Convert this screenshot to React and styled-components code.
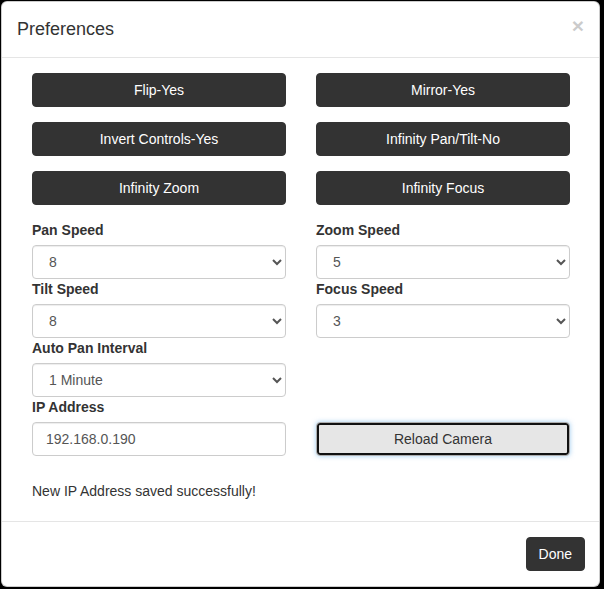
import React from "react";
import styled, { createGlobalStyle } from "styled-components";

const Global = createGlobalStyle`
  html, body { margin: 0; padding: 0; background: #000; }
  body {
    font-family: "Liberation Sans", Arial, Helvetica, sans-serif;
    font-size: 14px;
    line-height: 20px;
    color: #333;
  }
  * { box-sizing: border-box; }
`;

const Page = styled.div`
  width: 604px;
  height: 589px;
  padding: 1px 4px 0 1px;
`;

const Modal = styled.div`
  background: #fff;
  border: 1px solid rgba(0, 0, 0, 0.2);
  border-radius: 6px;
  width: 599px;
  overflow: hidden;
`;

const Header = styled.div`
  display: flex;
  align-items: flex-start;
  justify-content: space-between;
  padding: 15px;
  border-bottom: 1px solid #e5e5e5;
`;

const Title = styled.h4`
  margin: 0;
  font-size: 18px;
  font-weight: 500;
  line-height: 25px;
  color: #333;
`;

const Close = styled.button`
  border: 0;
  background: transparent;
  padding: 0;
  margin-top: -2px;
  font-family: inherit;
  font-size: 21px;
  font-weight: bold;
  line-height: 1;
  color: #000;
  opacity: 0.2;
  text-shadow: 0 1px 0 #fff;
  cursor: pointer;
`;

const Body = styled.div`
  padding: 15px 29px 20px 30px;
`;

const ButtonGrid = styled.div`
  display: grid;
  grid-template-columns: 1fr 1fr;
  column-gap: 30px;
  row-gap: 15px;
`;

const DarkButton = styled.button`
  height: 34px;
  padding: 6px 12px;
  border: 1px solid #333;
  border-radius: 4px;
  background: #333;
  color: #fff;
  font-family: inherit;
  font-size: 14px;
  line-height: 20px;
  cursor: pointer;
`;

const FieldGrid = styled.div`
  display: grid;
  grid-template-columns: 1fr 1fr;
  column-gap: 30px;
  margin-top: 15px;
  align-items: end;
`;

const Field = styled.div`
  display: flex;
  flex-direction: column;
`;

const Label = styled.label`
  font-weight: bold;
  line-height: 20px;
  margin-bottom: 5px;
  color: #333;
`;

const controlStyles = `
  height: 34px;
  width: 100%;
  padding: 6px 12px;
  border: 1px solid #ccc;
  border-radius: 4px;
  background: #fff;
  color: #555;
  font-family: "Liberation Sans", Arial, Helvetica, sans-serif;
  font-size: 14px;
  line-height: 20px;
  box-shadow: inset 0 1px 1px rgba(0, 0, 0, 0.075);
`;

const Select = styled.select`
  ${controlStyles}
`;

const Input = styled.input`
  ${controlStyles}
  padding-left: 13px;
`;

const ReloadButton = styled.button`
  height: 34px;
  width: 100%;
  padding: 6px 12px;
  border: 1px solid #adadad;
  border-radius: 4px;
  background: #e6e6e6;
  color: #333;
  font-family: inherit;
  font-size: 14px;
  line-height: 20px;
  box-shadow: inset 0 0 0 2px #111, 0 0 5px rgba(102, 175, 233, 0.6);
  cursor: pointer;
`;

const Message = styled.p`
  margin: 25px 0 0;
  line-height: 20px;
  color: #333;
`;

const Footer = styled.div`
  display: flex;
  justify-content: flex-end;
  padding: 15px 14px 15px 15px;
  border-top: 1px solid #e5e5e5;
`;

const DoneButton = styled(DarkButton)`
  width: auto;
`;

const speeds = ["1", "2", "3", "4", "5", "6", "7", "8", "9", "10"];

function SpeedSelect({ value }) {
  return (
    <Select defaultValue={value}>
      {speeds.map((s) => (
        <option key={s} value={s}>
          {s}
        </option>
      ))}
    </Select>
  );
}

export default function App() {
  return (
    <Page>
      <Global />
      <Modal>
        <Header>
          <Title>Preferences</Title>
          <Close aria-label="Close">×</Close>
        </Header>
        <Body>
          <ButtonGrid>
            <DarkButton>Flip-Yes</DarkButton>
            <DarkButton>Mirror-Yes</DarkButton>
            <DarkButton>Invert Controls-Yes</DarkButton>
            <DarkButton>Infinity Pan/Tilt-No</DarkButton>
            <DarkButton>Infinity Zoom</DarkButton>
            <DarkButton>Infinity Focus</DarkButton>
          </ButtonGrid>
          <FieldGrid>
            <Field>
              <Label>Pan Speed</Label>
              <SpeedSelect value="8" />
            </Field>
            <Field>
              <Label>Zoom Speed</Label>
              <SpeedSelect value="5" />
            </Field>
            <Field>
              <Label>Tilt Speed</Label>
              <SpeedSelect value="8" />
            </Field>
            <Field>
              <Label>Focus Speed</Label>
              <SpeedSelect value="3" />
            </Field>
            <Field>
              <Label>Auto Pan Interval</Label>
              <Select defaultValue="1">
                <option value="1">1 Minute</option>
                <option value="2">2 Minutes</option>
                <option value="5">5 Minutes</option>
              </Select>
            </Field>
            <div />
            <Field>
              <Label>IP Address</Label>
              <Input defaultValue="192.168.0.190" />
            </Field>
            <ReloadButton>Reload Camera</ReloadButton>
          </FieldGrid>
          <Message>New IP Address saved successfully!</Message>
        </Body>
        <Footer>
          <DoneButton>Done</DoneButton>
        </Footer>
      </Modal>
    </Page>
  );
}
